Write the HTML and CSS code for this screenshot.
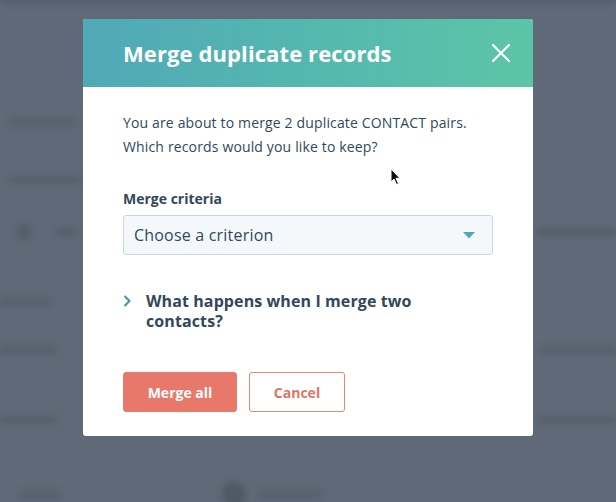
FILE: index.html
```html
<!DOCTYPE html>
<html lang="en">
    <head>
        <meta charset="utf8">
        <meta name="viewport" content="width=device-width, initial-scale=1.0">
        <title>Merge duplicate records</title>
        <link rel="stylesheet" href="styles.css">
    </head>
    <body>
        <div class="page">
            <div class="topbar"></div>
            <div class="row r1"><span class="bar w64"></span></div>
            <div class="row r2"><span class="bar w70"></span></div>
            <div class="row r3"><span class="dot"></span><span class="bar w20"></span><span class="grow"></span><span class="bar w80"></span></div>
            <div class="row r4"><span class="bar w50"></span></div>
            <div class="row r5"><span class="bar w56"></span><span class="grow"></span><span class="bar w76"></span></div>
            <div class="row r6"><span class="bar w56"></span><span class="grow"></span><span class="bar w76"></span></div>
            <div class="row r7"><span class="bar w40"></span><span class="gap150"></span><span class="dot big"></span><span class="bar w64"></span></div>
        </div>

        <div class="overlay">
            <div class="modal">
                <div class="modal-header">
                    <h1>Merge duplicate records</h1>
                    <a href="#" class="close" aria-label="Close">
                        <svg width="18" height="18" viewBox="0 0 18 18"><path d="M1 1 L17 17 M17 1 L1 17" stroke="#fff" stroke-width="2.2" stroke-linecap="round"/></svg>
                    </a>
                </div>
                <div class="modal-body">
                    <p class="intro">You are about to merge 2 duplicate CONTACT pairs.<br>Which records would you like to keep?</p>
                    <label class="field-label" for="criteria">Merge criteria</label>
                    <div class="select" id="criteria">
                        <span>Choose a criterion</span>
                        <svg width="12" height="7" viewBox="0 0 12 7"><path d="M0 0 H12 L6 6.5 Z" fill="#4fa9b5"/></svg>
                    </div>
                    <div class="toggle">
                        <svg class="chev" width="8" height="12" viewBox="0 0 8 12"><path d="M1.5 1 L6.5 6 L1.5 11" fill="none" stroke="#4a9aa6" stroke-width="2.2"/></svg>
                        <h2>What happens when I merge two contacts?</h2>
                    </div>
                    <div class="actions">
                        <button class="btn primary">Merge all</button>
                        <button class="btn secondary">Cancel</button>
                    </div>
                </div>
            </div>
            <svg class="pointer" width="12" height="18" viewBox="0 0 12 18"><path d="M1 1 L1 14 L4 11 L6.5 16.5 L8.5 15.6 L6 10.3 L10 10.3 Z" fill="#111" stroke="#fff" stroke-width="1"/></svg>
        </div>
    </body>
</html>
```

FILE: styles.css
```css
body {
    margin: 0;
    font-family: "Open Sans", "Lato", sans-serif;
    background-color: #5f6977;
    overflow: hidden;
}
.page {
    height: 502px;
    filter: blur(3px);
}
.topbar {
    height: 3px;
    background-color: #4b5360;
}
.row {
    display: flex;
    align-items: center;
    height: 10px;
}
.r1 { margin-top: 114px; padding-left: 10px; }
.r2 { margin-top: 48px; padding-left: 10px; }
.r3 { margin-top: 42px; padding-left: 16px; }
.r4 { margin-top: 60px; }
.r5 { margin-top: 38px; }
.r6 { margin-top: 60px; }
.r7 { margin-top: 64px; padding-left: 20px; }
.bar {
    height: 8px;
    background-color: #56606d;
    margin-right: 12px;
}
.dot {
    width: 16px;
    height: 16px;
    border-radius: 50%;
    background-color: #545e6b;
    margin-right: 24px;
}
.dot.big {
    width: 24px;
    height: 24px;
    background-color: #4f5865;
    margin-right: 12px;
}
.grow { flex: 1; }
.gap150 { width: 150px; }
.w20 { width: 20px; }
.w40 { width: 40px; }
.w50 { width: 50px; }
.w56 { width: 56px; }
.w64 { width: 64px; }
.w70 { width: 70px; }
.w76 { width: 76px; margin-right: 0; }
.w80 { width: 80px; margin-right: 0; }

.overlay {
    position: absolute;
    top: 0;
    left: 0;
    right: 0;
    bottom: 0;
}
.modal {
    position: absolute;
    top: 19px;
    left: 83px;
    width: 450px;
    background-color: #fff;
    border-radius: 3px;
    overflow: hidden;
}
.pointer {
    position: absolute;
    top: 168px;
    left: 390px;
}
.modal-header {
    height: 68px;
    display: flex;
    align-items: center;
    justify-content: space-between;
    padding: 0 23px 0 40px;
    background: linear-gradient(90deg, #4fa9b7, #5cc5a7);
}
.modal-header h1 {
    margin: 0;
    color: #fff;
    font-size: 22px;
    font-weight: 700;
    letter-spacing: 0.1px;
}
.close {
    display: flex;
    padding: 0;
}
.modal-body {
    padding: 24px 40px 24px 40px;
    color: #33475b;
}
.intro {
    margin: 0 0 30px 0;
    font-size: 14px;
    line-height: 24px;
    letter-spacing: 0.15px;
}
.field-label {
    display: block;
    font-size: 14px;
    font-weight: 700;
    line-height: 20px;
    margin-bottom: 6px;
}
.select {
    display: flex;
    align-items: center;
    justify-content: space-between;
    box-sizing: border-box;
    height: 40px;
    padding: 0 17px 0 10px;
    background-color: #f5f8fa;
    border: 1px solid #cbd6e2;
    border-radius: 3px;
    font-size: 16px;
    letter-spacing: 0.2px;
}
.toggle {
    display: flex;
    align-items: flex-start;
    margin-top: 36px;
}
.chev {
    margin: 4px 15px 0 0;
}
.toggle h2 {
    margin: 0;
    width: 300px;
    font-size: 16px;
    font-weight: 700;
    line-height: 20px;
    letter-spacing: 0.1px;
}
.actions {
    display: flex;
    gap: 12px;
    margin-top: 41px;
}
.btn {
    height: 40px;
    box-sizing: border-box;
    border-radius: 3px;
    font-family: inherit;
    font-size: 14px;
    font-weight: 700;
    cursor: pointer;
}
.primary {
    width: 114px;
    background-color: #e8786a;
    border: 1px solid #e8786a;
    color: #fff;
}
.secondary {
    width: 96px;
    background-color: #fff;
    border: 1px solid #e8867a;
    color: #df7566;
}
```
